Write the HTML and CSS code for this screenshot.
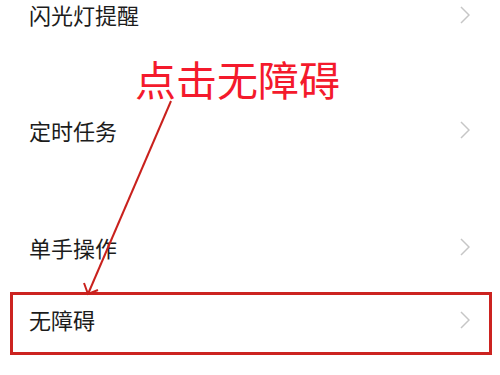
FILE: index.html
```html
<!DOCTYPE html>
<html lang="zh-CN">
<head>
  <meta charset="UTF-8" />
  <title>更多设置</title>
  <link rel="stylesheet" href="styles.css">
</head>
<body>
  <main class="settings">
    <div class="item item-top">
      <span class="label">闪光灯提醒</span>
      <svg class="chevron" width="10" height="18" viewBox="0 0 10 18"><polyline points="1,1 9,9 1,17" /></svg>
    </div>
    <div class="item">
      <span class="label">定时任务</span>
      <svg class="chevron" width="10" height="18" viewBox="0 0 10 18"><polyline points="1,1 9,9 1,17" /></svg>
    </div>
    <div class="item">
      <span class="label">单手操作</span>
      <svg class="chevron" width="10" height="18" viewBox="0 0 10 18"><polyline points="1,1 9,9 1,17" /></svg>
    </div>
    <div class="item item-marked">
      <span class="label">无障碍</span>
      <svg class="chevron" width="10" height="18" viewBox="0 0 10 18"><polyline points="1,1 9,9 1,17" /></svg>
    </div>
  </main>

  <!-- annotation on top of the screenshot -->
  <div class="note">点击无障碍</div>
  <svg class="arrow" width="500" height="375" viewBox="0 0 500 375">
    <line x1="171" y1="101" x2="88" y2="294" />
    <polyline points="84,283 88,294 98,290" />
  </svg>
</body>
</html>
```

FILE: styles.css
```css
* {
  margin: 0;
  padding: 0;
  box-sizing: border-box;
}

body {
  font-family: "Noto Sans CJK SC", "Noto Sans", sans-serif;
  background: #fff;
  color: #1c1c1c;
  width: 500px;
  height: 375px;
  overflow: hidden;
  position: relative;
}

.settings {
  display: flex;
  flex-direction: column;
  gap: 53px;
}

.item {
  height: 64px;
  display: flex;
  align-items: center;
  justify-content: space-between;
  padding: 0 30px 4px 29px;
}

/* first row is cut by the top of the screen */
.item-top {
  height: 29px;
  padding-bottom: 0;
  margin-bottom: 18px;
}

.label {
  font-size: 22px;
  line-height: 1.2;
}

.chevron polyline {
  fill: none;
  stroke: #c6c6c6;
  stroke-width: 1.5;
}

.item-marked {
  height: 63px;
  margin: -42px 8px 0 10px;
  border: 3px solid #cc2320;
  padding: 0 19px 8px 16px;
}

.note {
  position: absolute;
  left: 135px;
  top: 58px;
  font-size: 41px;
  line-height: 1;
  color: #f41a2c;
}

.arrow {
  position: absolute;
  left: 0;
  top: 0;
}

.arrow line,
.arrow polyline {
  fill: none;
  stroke: #c9211d;
  stroke-width: 2;
}
```
